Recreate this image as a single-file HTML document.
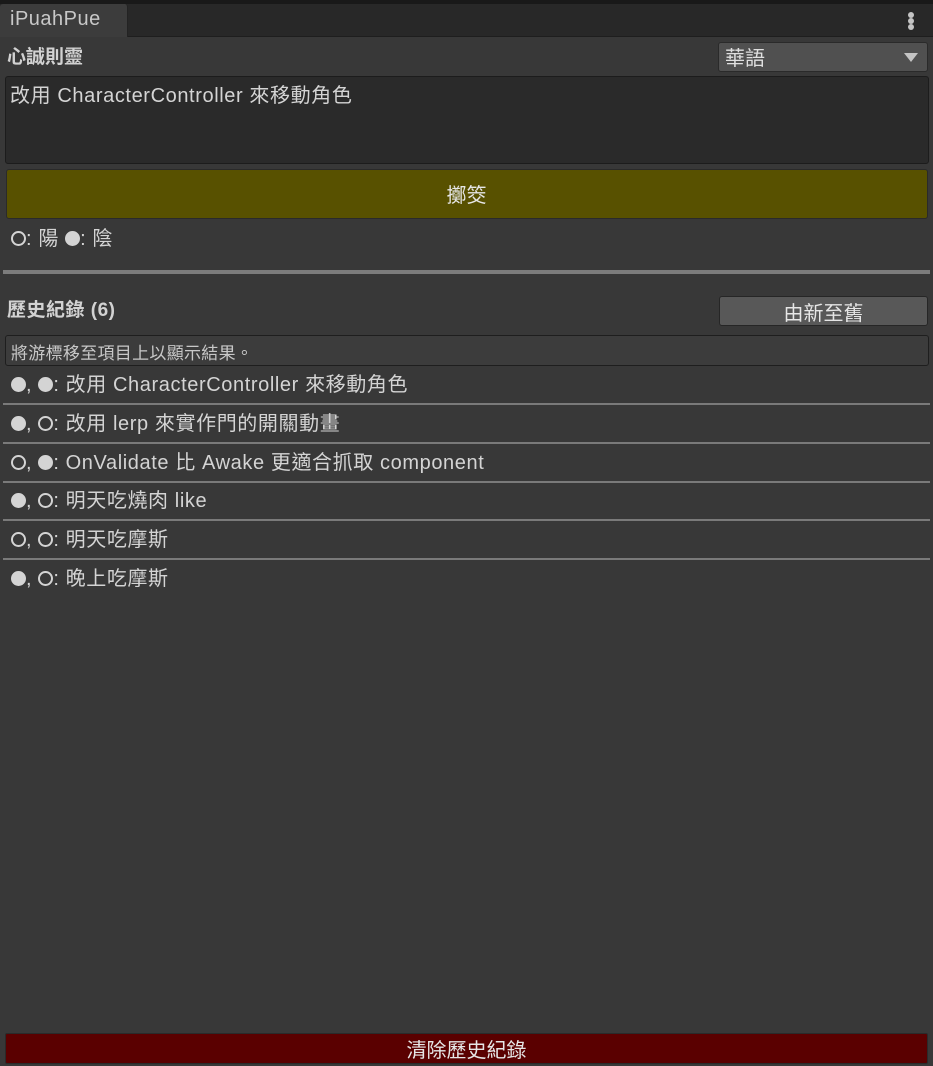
<!DOCTYPE html>
<html><head><meta charset="utf-8"><style>
*{margin:0;padding:0;box-sizing:border-box}
body{width:933px;height:1066px;background:#383838;position:relative;overflow:hidden;font-family:"Liberation Sans","Noto Sans CJK TC",sans-serif;color:#d2d2d2;font-size:20px}
.a{position:absolute;white-space:nowrap}
.line{position:absolute;left:3px;width:927px;height:2px;background:#7a7a7a}
.row{position:absolute;left:11px;font-size:20px;line-height:24px;color:#d4d4d4;letter-spacing:0.6px;white-space:nowrap}
.f,.o{display:inline-block;width:15px;height:15px;border-radius:50%;vertical-align:-1px}
.f{background:#d4d4d4}
.o{border:2px solid #d4d4d4}
</style></head><body>
<div class="a" style="left:0;top:0;width:933px;height:4px;background:#191919"></div>
<div class="a" style="left:0;top:4px;width:933px;height:33px;background:#282828;border-bottom:1px solid #1e1e1e"></div>
<div class="a" style="left:0;top:4px;width:128px;height:33px;background:#3c3c3c;border-radius:3px 3px 0 0;border-right:1px solid #232323"></div>
<div class="a" style="left:10px;top:8px;font-size:20px;color:#c8c8c8;letter-spacing:0.5px">iPuahPue</div>
<div class="a" style="left:908px;top:12px;width:6px;height:6px;border-radius:3px;background:#c4c4c4"></div>
<div class="a" style="left:908px;top:18px;width:6px;height:6px;border-radius:3px;background:#c4c4c4"></div>
<div class="a" style="left:908px;top:24px;width:6px;height:6px;border-radius:3px;background:#c4c4c4"></div>
<div class="a" style="left:7px;top:42px;font-size:19px;font-weight:bold;color:#d2d2d2">心誠則靈</div>
<div class="a" style="left:718px;top:42px;width:210px;height:30px;background:#505050;border:1px solid #2a2a2a;border-radius:3px"></div>
<div class="a" style="left:725px;top:42px;font-size:20px;color:#e0e0e0">華語</div>
<div class="a" style="left:904px;top:53px;width:0;height:0;border-left:7px solid transparent;border-right:7px solid transparent;border-top:9px solid #c4c4c4"></div>
<div class="a" style="left:5px;top:76px;width:924px;height:88px;background:#2a2a2a;border:1px solid #1c1c1c;border-radius:3px"></div>
<div class="a" style="left:10px;top:79px;font-size:20px;color:#d4d4d4;letter-spacing:0.6px">改用 CharacterController 來移動角色</div>
<div class="a" style="left:6px;top:169px;width:922px;height:50px;background:#585100;border:1px solid #2a2a2a;border-radius:3px"></div>
<div class="a" style="left:0;top:179px;width:933px;text-align:center;font-size:20px;color:#e6e6e6">擲筊</div>
<div class="row" style="top:227px"><span class="o"></span>: 陽 <span class="f"></span>: 陰</div>
<div class="a" style="left:3px;top:270px;width:927px;height:4px;background:#7c7c7c"></div>
<div class="a" style="left:7px;top:295px;font-size:19px;font-weight:bold;color:#d2d2d2;letter-spacing:0.5px">歷史紀錄 (6)</div>
<div class="a" style="left:719px;top:296px;width:209px;height:30px;background:#585858;border:1px solid #262626;border-radius:3px"></div>
<div class="a" style="left:719px;top:297px;width:209px;text-align:center;font-size:20px;color:#e6e6e6">由新至舊</div>
<div class="a" style="left:5px;top:335px;width:924px;height:31px;background:#3c3c3c;border:1px solid #1e1e1e;border-radius:3px"></div>
<div class="a" style="left:11px;top:339px;font-size:17px;color:#c8c8c8;letter-spacing:0.3px">將游標移至項目上以顯示結果。</div>
<div class="row" style="top:373px"><span class="f"></span>, <span class="f"></span>: 改用 CharacterController 來移動角色</div>
<div class="line" style="top:403px"></div>
<div class="row" style="top:412px"><span class="f"></span>, <span class="o"></span>: 改用 lerp 來實作門的開關動畫</div>
<div class="line" style="top:442px"></div>
<div class="row" style="top:451px"><span class="o"></span>, <span class="f"></span>: OnValidate 比 Awake 更適合抓取 component</div>
<div class="line" style="top:481px"></div>
<div class="row" style="top:489px"><span class="f"></span>, <span class="o"></span>: 明天吃燒肉 like</div>
<div class="line" style="top:519px"></div>
<div class="row" style="top:528px"><span class="o"></span>, <span class="o"></span>: 明天吃摩斯</div>
<div class="line" style="top:558px"></div>
<div class="row" style="top:567px"><span class="f"></span>, <span class="o"></span>: 晚上吃摩斯</div>
<div class="a" style="left:5px;top:1033px;width:923px;height:31px;background:#5a0000;border:1px solid #2a2a2a;border-radius:2px"></div>
<div class="a" style="left:0;top:1034px;width:933px;text-align:center;font-size:20px;color:#e6e6e6">清除歷史紀錄</div>
</body></html>
